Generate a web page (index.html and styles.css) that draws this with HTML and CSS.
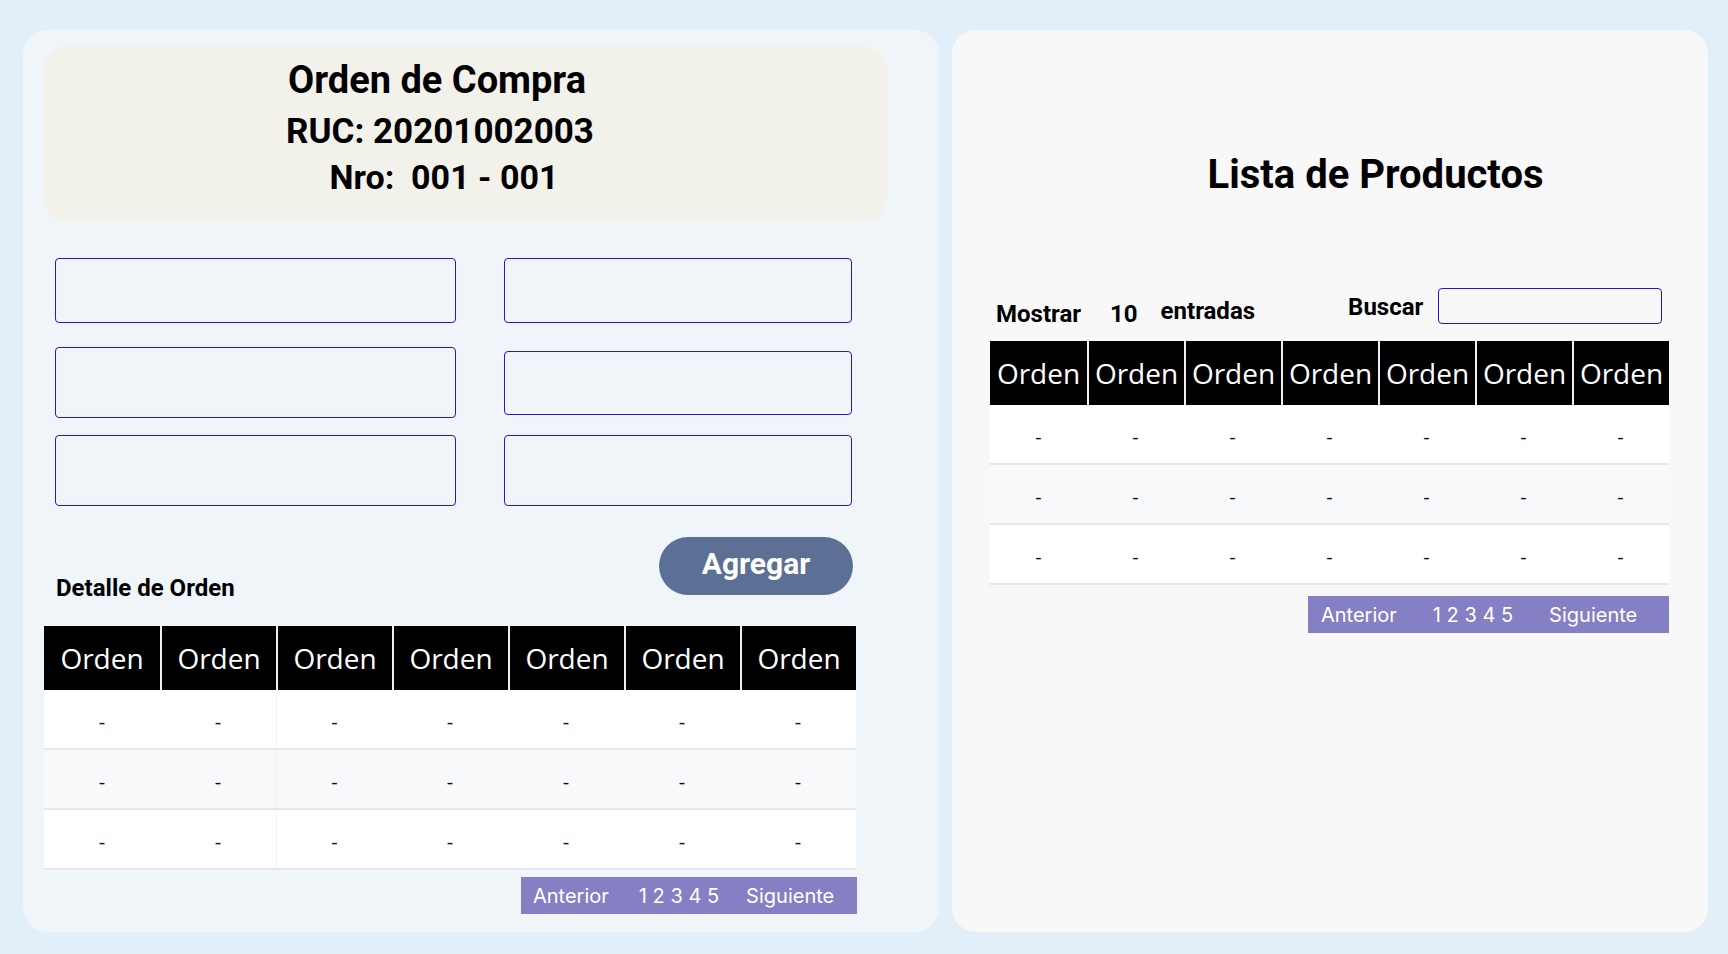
FILE: index.html
```html
<!DOCTYPE html>
<html lang="es">
<head>
<meta charset="utf-8">
<title>Orden de Compra</title>
<link rel="stylesheet" href="styles.css">
</head>
<body>
<div class="page">
  <section class="card card-order">
    <header class="order-head">
      <div class="order-line order-title">Orden de Compra</div>
      <div class="order-line order-ruc">RUC: 20201002003</div>
      <div class="order-line order-nro">Nro:&nbsp; 001 - 001</div>
    </header>

    <div class="form-grid">
      <input class="field field-r1" type="text">
      <input class="field field-r1" type="text">
      <input class="field field-r2" type="text">
      <input class="field field-r2-short" type="text">
      <input class="field field-r3" type="text">
      <input class="field field-r3" type="text">
    </div>

    <div class="detail-row">
      <h2 class="detail-title">Detalle de Orden</h2>
      <button class="btn-add" type="button">Agregar</button>
    </div>

    <div class="table-wrap table-wrap-order">
      <table class="data-table table-order">
        <thead>
          <tr><th>Orden</th><th>Orden</th><th>Orden</th><th>Orden</th><th>Orden</th><th>Orden</th><th>Orden</th></tr>
        </thead>
        <tbody>
          <tr><td>-</td><td>-</td><td>-</td><td>-</td><td>-</td><td>-</td><td>-</td></tr>
          <tr class="alt"><td>-</td><td>-</td><td>-</td><td>-</td><td>-</td><td>-</td><td>-</td></tr>
          <tr><td>-</td><td>-</td><td>-</td><td>-</td><td>-</td><td>-</td><td>-</td></tr>
        </tbody>
      </table>
      <nav class="pager pager-order">
        <span>Anterior</span><span>1 2 3 4 5</span><span class="pager-next">Siguiente</span>
      </nav>
    </div>
  </section>

  <section class="card card-products">
    <h1 class="products-title">Lista de Productos</h1>

    <div class="controls">
      <span class="ctl ctl-show">Mostrar</span>
      <span class="ctl ctl-num">10</span>
      <span class="ctl ctl-entries">entradas</span>
      <span class="ctl ctl-search">Buscar</span>
      <input class="field search-field" type="text">
    </div>

    <div class="table-wrap table-wrap-products">
      <table class="data-table table-products">
        <thead>
          <tr><th>Orden</th><th>Orden</th><th>Orden</th><th>Orden</th><th>Orden</th><th>Orden</th><th>Orden</th></tr>
        </thead>
        <tbody>
          <tr><td>-</td><td>-</td><td>-</td><td>-</td><td>-</td><td>-</td><td>-</td></tr>
          <tr class="alt"><td>-</td><td>-</td><td>-</td><td>-</td><td>-</td><td>-</td><td>-</td></tr>
          <tr><td>-</td><td>-</td><td>-</td><td>-</td><td>-</td><td>-</td><td>-</td></tr>
        </tbody>
      </table>
      <nav class="pager pager-products">
        <span>Anterior</span><span>1 2 3 4 5</span><span>Siguiente</span>
      </nav>
    </div>
  </section>
</div>
</body>
</html>
```

FILE: styles.css
```css
* {
  box-sizing: border-box;
}

html, body {
  margin: 0;
  padding: 0;
}

body {
  background: #e2eff8;
  font-family: Roboto, "Liberation Sans", sans-serif;
  color: #000;
}

.page {
  display: flex;
  gap: 13px;
  height: 954px;
  padding: 30px 20px 22px 23px;
}

.card {
  border-radius: 24px;
  display: flex;
  flex-direction: column;
}

.card-order {
  width: 916px;
  background: #eff5f8;
  padding: 16px 0 0 21px;
}

.card-products {
  width: 756px;
  background: #f8f8f8;
  padding: 0 39px 0 38px;
}

/* ---------- order header ---------- */
.order-head {
  width: 843px;
  height: 176px;
  background: #f2f2ea;
  border-radius: 24px;
  padding: 10px 51px 0 0;
  text-align: center;
}

.order-line {
  font-weight: 700;
  line-height: 48px;
}

.order-title { font-size: 38px; padding-right: 6px; }
.order-ruc { font-size: 35px; line-height: 50px; margin-top: 3px; }
.order-nro { font-size: 34px; line-height: 46px; margin-top: -3px; padding-left: 8px; }

/* ---------- form ---------- */
.form-grid {
  display: grid;
  grid-template-columns: 401px 348px;
  grid-template-rows: 89px 88px 71px;
  column-gap: 48px;
  align-items: start;
  margin: 36px 0 0 11px;
}

.field {
  display: block;
  width: 100%;
  border: 1px solid #2b12d8;
  border-radius: 4px;
  background: transparent;
  outline: none;
  padding: 0 10px;
  font: 16px Roboto, sans-serif;
}

.field-r1 { height: 65px; }
.field-r2 { height: 71px; }
.field-r2-short { height: 64px; margin-top: 4px; }
.field-r3 { height: 71px; }

/* ---------- detail row ---------- */
.detail-row {
  width: 812px;
  display: flex;
  justify-content: space-between;
  align-items: flex-start;
  margin-top: 31px;
  padding: 0 3px 0 12px;
  height: 65px;
}

.detail-title {
  margin: 37px 0 0;
  font-size: 24px;
  font-weight: 700;
  line-height: 28px;
}

.btn-add {
  width: 194px;
  height: 58px;
  border: none;
  border-radius: 29px;
  background: #5c6f94;
  color: #fff;
  font: 700 30px Roboto, sans-serif;
  padding: 0 0 5px;
  cursor: pointer;
}

/* ---------- tables ---------- */
.table-wrap {
  display: flex;
  flex-direction: column;
  align-items: flex-end;
}

.table-wrap-order {
  width: 813px;
  margin-top: 24px;
}

.table-wrap-products {
  width: 679px;
  margin-top: 17px;
}

.data-table {
  align-self: flex-start;
  table-layout: fixed;
  border-collapse: separate;
  border-spacing: 0;
  font-family: "Open Sans", "Noto Sans", sans-serif;
}

.table-order { width: 812px; }
.table-products { width: 679px; }

.data-table th {
  height: 64px;
  padding: 0;
  background: #000;
  color: #fff;
  font-size: 28px;
  font-weight: 400;
  text-align: center;
  white-space: nowrap;
  overflow: hidden;
}

.data-table th + th {
  border-left: 2px solid #eef1f3;
}

.data-table td {
  height: 60px;
  padding: 4px 0 0;
  background: #fff;
  border-bottom: 2px solid #e5e7eb;
  text-align: center;
  font-size: 20px;
  color: #111;
}

.data-table tr.alt td {
  background: #f8f9fb;
}

.table-order td:nth-child(3) {
  border-left: 1px solid #edf2f4;
}

/* ---------- pager ---------- */
.pager {
  display: flex;
  align-items: center;
  height: 37px;
  background: #857fc4;
  color: #fff;
  font-family: Inter, "Liberation Sans", sans-serif;
  font-size: 20px;
  white-space: pre;
}

.pager-order {
  width: 336px;
  margin-top: 7px;
  padding-left: 12px;
  gap: 30px;
}

.pager-order .pager-next {
  margin-left: -3px;
}

.pager-products {
  width: 361px;
  margin-top: 11px;
  padding-left: 13px;
  gap: 36px;
}

/* ---------- products ---------- */
.products-title {
  margin: 121px 0 0;
  padding-left: 92px;
  text-align: center;
  font-size: 40px;
  font-weight: 700;
  line-height: 48px;
}

.controls {
  display: flex;
  align-items: flex-start;
  height: 36px;
  margin-top: 89px;
}

.ctl {
  font-size: 24px;
  font-weight: 700;
  line-height: 28px;
  white-space: nowrap;
}

.ctl-show { margin: 12px 0 0 6px; }
.ctl-num { margin: 12px 0 0 29px; }
.ctl-entries { margin: 9px 0 0 23px; }
.ctl-search { margin: 5px 0 0 93px; }

.search-field {
  width: 224px;
  height: 36px;
  margin-left: 15px;
}
```
